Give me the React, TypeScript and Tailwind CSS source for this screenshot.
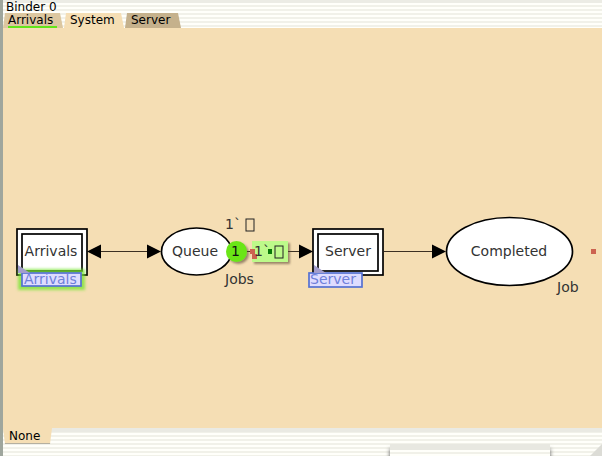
import React from "react";

const headerStripes =
  "bg-[repeating-linear-gradient(to_bottom,#fffffa_0px,#fffffa_2px,#f1f1e9_2px,#f1f1e9_4px)]";
const footerStripes =
  "bg-[repeating-linear-gradient(to_bottom,#f1f1e9_0px,#f1f1e9_1px,#fffffa_1px,#fffffa_3px,#f1f1e9_3px,#f1f1e9_4px)]";

function Tab({ label, look, selected, marked }: { label: string; look: string; selected?: boolean; marked?: boolean }) {
  return (
    <button
      type="button"
      role="tab"
      aria-selected={!!selected}
      className={`h-[15px] text-left text-xs leading-[15px] [clip-path:polygon(2px_0,calc(100%-3px)_0,100%_100%,0_100%)] ${look}`}
    >
      <span className={marked ? "block h-[15px] border-b-2 border-[#62e51a]" : "block h-[15px]"}>{label}</span>
    </button>
  );
}

/* An initial marking: one token of the unit colour, shown as an empty box. */
function Marking({ x, y }: { x: number; y: number }) {
  return (
    <g>
      <text x={x} y={y}>
        1`
      </text>
      <rect x={x + 21} y={y - 10} width="8" height="12" fill="none" stroke="#222" />
    </g>
  );
}

function Diagram() {
  return (
    <svg
      role="img"
      aria-label="System net"
      className="absolute top-[172px] left-0 h-[112px] w-[599px]"
      viewBox="3 200 599 112"
      fontSize="14"
      fill="#333"
    >
      <defs>
        <filter id="glow" x="-20%" y="-80%" width="140%" height="260%">
          <feGaussianBlur stdDeviation="1.5" />
        </filter>
        <filter id="shade" x="-20%" y="-20%" width="150%" height="150%">
          <feDropShadow dx="2" dy="2" stdDeviation="1" floodColor="#5a4a30" floodOpacity="0.6" />
        </filter>
      </defs>

      <path d="M95 251.500H150M235 251.500H305M384 251.500H436" stroke="#3c3022" />
      <g fill="#000">
        <path d="M87 251.500L101 244.500V258.500Z" />
        <path d="M161 251.500L147 244.500V258.500Z" />
        <path d="M313 251.500L299 244.500V258.500Z" />
        <path d="M446 251.500L432 244.500V258.500Z" />
      </g>

      <g fill="#fff" stroke="#000" strokeWidth="1.700">
        <rect x="17" y="229" width="70" height="46" />
        <rect x="22" y="234" width="60" height="37" />
        <rect x="313" y="229" width="70" height="46" />
        <rect x="318" y="234" width="60" height="37" />
        <ellipse cx="196.500" cy="251.500" rx="35" ry="23.500" />
        <ellipse cx="509.500" cy="251.500" rx="63" ry="34" />
      </g>
      <g textAnchor="middle">
        <text x="51" y="256">Arrivals</text>
        <text x="195" y="256">Queue</text>
        <text x="348" y="256">Server</text>
        <text x="509" y="256">Completed</text>
      </g>
      <Marking x={225} y={229} />
      <text x="225" y="284">Jobs</text>
      <text x="557" y="292">Job</text>

      <rect x="18" y="269" width="67" height="21" fill="#74e52c" fillOpacity="0.75" filter="url(#glow)" />
      <g fill="#dedcff" stroke="#5571d2" strokeWidth="1.700">
        <rect x="22" y="273" width="59" height="13" />
        <rect x="309" y="273" width="53" height="14" />
      </g>
      <g fill="#a29dcc">
        <path d="M18 265L30 273H18Z" />
        <path d="M314 265L326 273H314Z" />
      </g>
      <g fill="#6f80da">
        <text x="24" y="284">Arrivals</text>
        <text x="310" y="284">Server</text>
      </g>

      <rect x="252" y="241" width="36" height="21" fill="#bdfa8a" filter="url(#shade)" />
      <circle cx="236.500" cy="251.500" r="10.500" fill="#6be619" filter="url(#shade)" />
      <text x="231" y="256" fill="#111">1</text>
      <g fill="#cc6350">
        <rect x="250" y="249" width="5" height="5" />
        <rect x="252" y="254" width="5" height="5" />
        <rect x="591" y="249" width="5" height="5" />
      </g>
      <Marking x={254} y={256} />
      <rect x="268" y="249" width="4" height="5" fill="#087a08" />
    </svg>
  );
}

export default function App() {
  return (
    <div className="flex h-screen overflow-hidden bg-[#9fa69d] pl-[3px] font-['DejaVu_Sans',sans-serif] text-black">
      <div className="relative flex min-w-0 flex-1 flex-col">
        <header className={`border-t-3 border-[#ecece5] ${headerStripes}`}>
          <h1 className="h-[10px] pl-[3px] text-xs leading-[8px]">Binder 0</h1>
          <div role="tablist" className="flex gap-px">
            <Tab label="Arrivals" look="w-[60px] bg-[#dcc7a0] pr-[6px] pl-[5px]" marked />
            <Tab label="System" look="w-[60px] bg-[#f5deb4] pl-[6px]" selected />
            <Tab label="Server" look="w-[56px] bg-[#c5b18c] pl-[6px]" />
          </div>
        </header>
        <main className="relative flex-1 overflow-hidden bg-[#f5deb4]">
          <Diagram />
        </main>
        <footer className={`flex h-7 border-t-4 border-[#eaeae3] ${footerStripes}`}>
          <button
            type="button"
            className="-mt-1 h-4 w-[49px] border-b border-[#b5b0a0] bg-[#f5deb4] pl-[6px] text-left text-xs leading-4 [clip-path:polygon(0_0,100%_0,calc(100%-2px)_100%,2px_100%)]"
          >
            None
          </button>
        </footer>
        <div className={`absolute right-[52px] bottom-0 h-3 w-40 border-t-6 border-[#e8e8e1] shadow-[0_5px_4px_#555] ${headerStripes}`} />
        <div className="absolute right-0 bottom-0 h-3 w-3 bg-[#dcdcd6] [clip-path:polygon(100%_0,100%_100%,0_100%)]" />
      </div>
    </div>
  );
}
